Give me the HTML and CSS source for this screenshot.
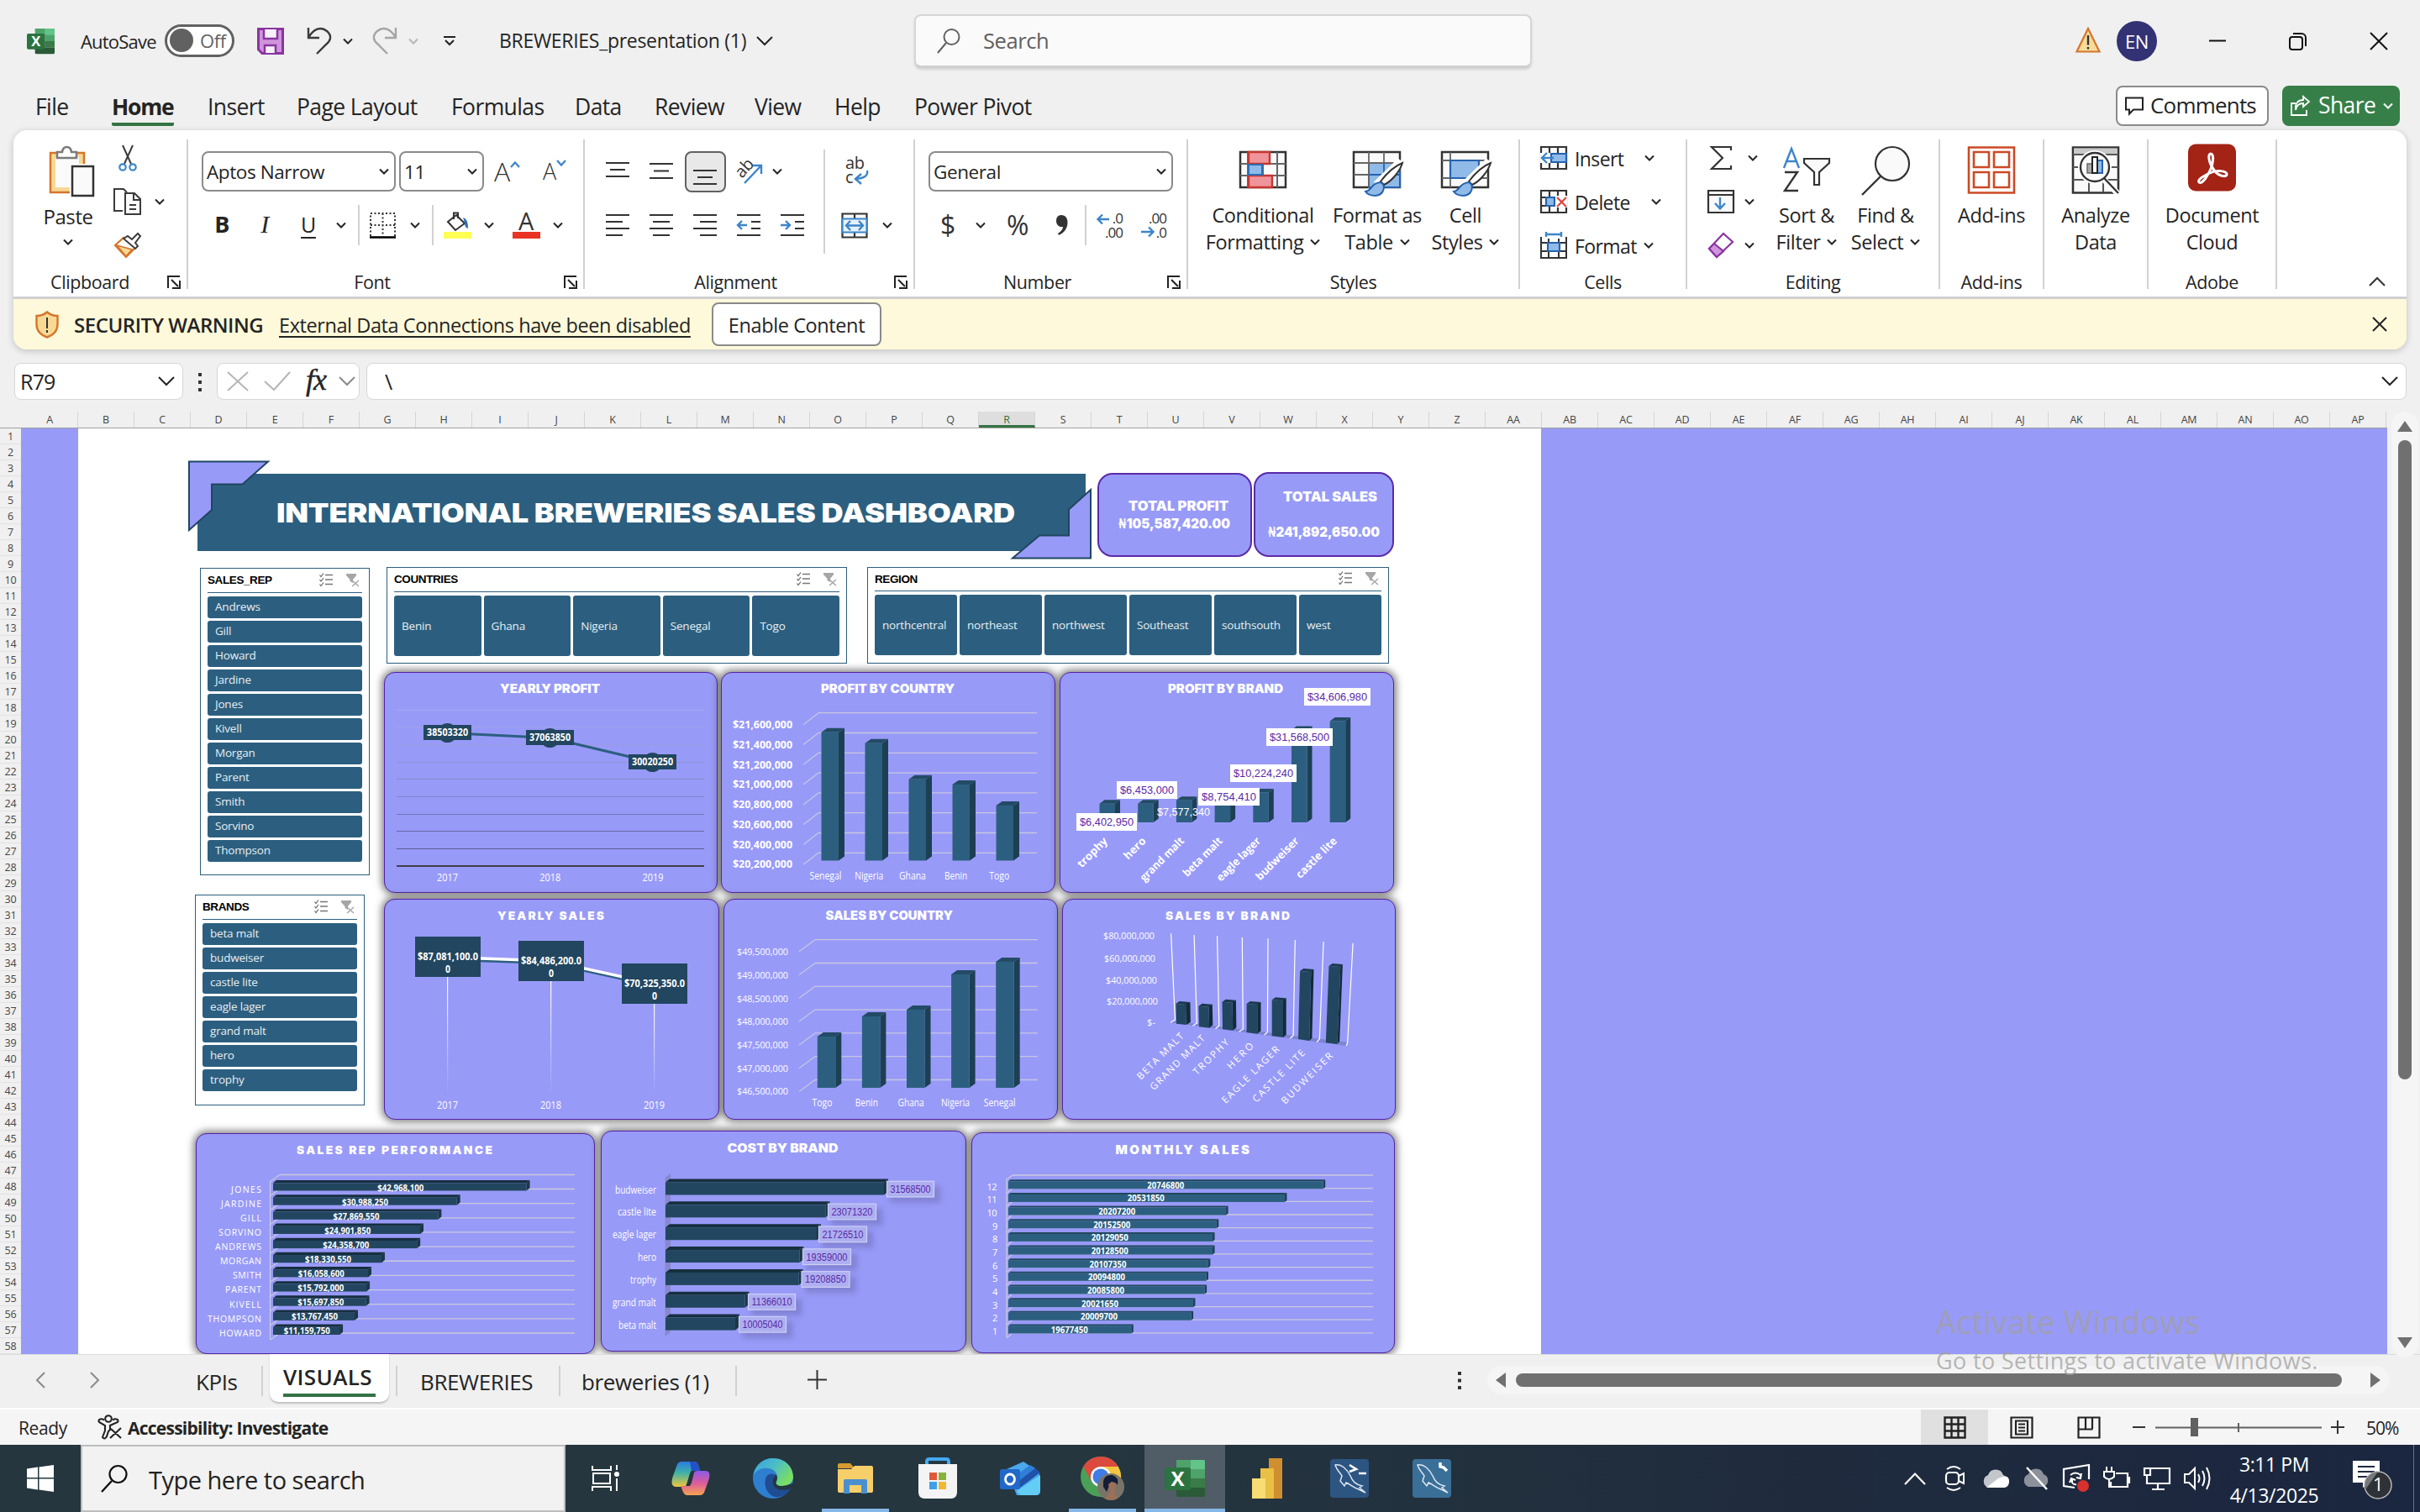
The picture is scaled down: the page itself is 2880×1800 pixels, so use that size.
FILE: index.html
```html
<!DOCTYPE html>
<html lang="en">
<head>
<meta charset="utf-8">
<title>BREWERIES_presentation (1) - Excel</title>
<link rel="stylesheet" href="styles.css">
</head>
<body>
<svg class="sprite" aria-hidden="true">
  <symbol id="chev" viewBox="0 0 12 8"><path d="M1 1.500 6 6.500 11 1.500" fill="none" stroke="currentColor" stroke-width="2"/></symbol>
  <symbol id="chev-lg" viewBox="0 0 20 12"><path d="M1 1 10 10 19 1" fill="none" stroke="currentColor" stroke-width="2"/></symbol>
  <symbol id="launch" viewBox="0 0 16 16"><path d="M1 15V1H15M5 5 13 13M15 6V15H6" fill="none" stroke="#222" stroke-width="2"/></symbol>
  <symbol id="multi" viewBox="0 0 16 16"><path d="M7 2.500H16M7 8H16M7 13.500H16" stroke="#777" stroke-width="1.300"/><path d="M.5 2.500 2 4.500 5 .5M.5 8 2 10 5 6M.5 13.500 2 15.500 5 11.500" fill="none" stroke="#666" stroke-width="1.200"/></symbol>
  <symbol id="unfilter" viewBox="0 0 16 16"><path d="M0 0H12V2L8 7V11L4.500 9V7L0 2Z" fill="#a6a6a6"/><path d="M7 8 15 15M15 8 7 15" stroke="#a6a6a6" stroke-width="1.500"/></symbol>
  <symbol id="xl" viewBox="0 0 48 46">
    <path d="M14 1H46a2 2 0 0 1 2 2V12H14Z" fill="#4ea36b"/><path d="M31 1H46a2 2 0 0 1 2 2V12H31Z" fill="#62c488"/>
    <path d="M14 12H31V23H14Z" fill="#3b9159"/><path d="M31 12H48V23H31Z" fill="#4ea36b"/><path d="M14 23H31V34H14Z" fill="#2c5a37"/><path d="M31 23H48V34H31Z" fill="#3a7b48"/><path d="M14 34H48V43a2 2 0 0 1-2 2H16a2 2 0 0 1-2-2Z" fill="#2a5a38"/>
    <rect x="0" y="10" width="31" height="27" rx="2.500" fill="#2b7340"/><text x="15.500" y="31.500" text-anchor="middle" class="xl-letter">X</text>
  </symbol>
</svg>

<header class="titlebar">
  <svg class="tb-logo" width="33" height="32"><use href="#xl"/></svg>
  <span class="tb-auto">AutoSave</span>
  <span class="toggle"><i></i>Off</span>
  <svg class="tb-save" width="32" height="32" viewBox="0 0 32 32"><path d="M1.500 1.500H30.500V30.500H6L1.500 26Z" fill="#cf94dc" stroke="#8a35a0" stroke-width="3"/><path d="M8 2V13H24V2" fill="#f7f0f8" stroke="#8a35a0" stroke-width="2.500"/><path d="M9 30V21H22V30" fill="#f7f0f8" stroke="#8a35a0" stroke-width="2.500"/></svg>
  <svg class="tb-undo" width="30" height="34" viewBox="0 0 30 34"><path d="M2 1V13H15M2 13C8 2 17-1 24 5s4 12-1 16L12 32" fill="none" stroke="#3b3b3b" stroke-width="2.400"/></svg>
  <svg class="chev tb-c1"><use href="#chev"/></svg>
  <svg class="tb-redo" width="30" height="34" viewBox="0 0 30 34"><path d="M28 1V13H15M28 13C22 2 13-1 6 5s-4 12 1 16L18 32" fill="none" stroke="#a5a5a5" stroke-width="2.400"/></svg>
  <svg class="chev tb-c2"><use href="#chev"/></svg>
  <svg class="tb-cust" width="14" height="12" viewBox="0 0 14 12"><path d="M0 1H14M2 5 7 10 12 5" fill="none" stroke="#222" stroke-width="2"/></svg>
  <span class="tb-name">BREWERIES_presentation (1)</span>
  <svg class="chev-lg tb-c3"><use href="#chev-lg"/></svg>
  <div class="tb-search">
    <svg width="28" height="30" viewBox="0 0 28 30"><circle cx="17.500" cy="10" r="9" fill="none" stroke="#616161" stroke-width="2"/><path d="M11 17 1 29" stroke="#616161" stroke-width="2"/></svg>
    <span>Search</span>
  </div>
  <svg class="tb-warn" width="30" height="31" viewBox="0 0 30 31"><path d="M15 2 28.500 29.500H1.500Z" fill="#f6dc9a" stroke="#d5752d" stroke-width="2.200"/><path d="M15 10V21.500M15 24V26.500" stroke="#333" stroke-width="2.400"/></svg>
  <span class="avatar">EN</span>
  <svg class="tb-min" width="20" height="20" viewBox="0 0 20 20"><path d="M0 9.500H20" stroke="#111" stroke-width="2"/></svg>
  <svg class="tb-max" width="21" height="21" viewBox="0 0 21 21"><rect x="1" y="5" width="15" height="15" rx="3" fill="none" stroke="#111" stroke-width="2"/><path d="M5 1H15a5 5 0 0 1 5 5V16" fill="none" stroke="#111" stroke-width="2"/></svg>
  <svg class="tb-close" width="20" height="20" viewBox="0 0 20 20"><path d="M0 0 20 20M20 0 0 20" stroke="#111" stroke-width="2"/></svg>
</header>

<nav class="menu">
  <span>File</span><span class="on">Home</span><span>Insert</span><span>Page Layout</span><span>Formulas</span><span>Data</span><span>Review</span><span>View</span><span>Help</span><span>Power Pivot</span>
  <div class="menu-btns">
    <span class="btn-comments"><svg width="22" height="22" viewBox="0 0 22 22"><path d="M1 1.500H21V15.500H10L5 20.500V15.500H1Z" fill="none" stroke="#222" stroke-width="2"/></svg>Comments</span>
    <span class="btn-share"><svg width="24" height="24" viewBox="0 0 24 24"><path d="M6 9H1V23H19V17" fill="none" stroke="#fff" stroke-width="1.800"/><path d="M6 17C7 11 10 9 15 9V13L22 7 15 1V5C9 5 5 9 6 17Z" fill="none" stroke="#fff" stroke-width="1.800"/></svg>Share<svg class="chev"><use href="#chev"/></svg></span>
  </div>
</nav>

<section class="ribbon-card">
<div class="ribbon">
  <div class="grp g-clip">
    <div class="cmds">
      <div class="paste">
        <svg width="56" height="62" viewBox="0 0 56 62"><path d="M2 9H42V56H2Z" fill="#f8d994" stroke="#d5752d" stroke-width="2.500"/><path d="M8 14H36V50H8Z" fill="#fafafa"/><path d="M10 15V8H16C17 0 26 0 27 8H33V15Z" fill="#fff" stroke="#7a7a7a" stroke-width="2.500"/><path d="M28 25H54V60H28Z" fill="#fafafa" stroke="#fff" stroke-width="6"/><path d="M28 25H53V60H28Z" fill="#fafafa" stroke="#333" stroke-width="2.500"/></svg>
        <span>Paste</span><svg class="chev"><use href="#chev"/></svg>
      </div>
      <div class="clip-tools">
        <div><svg width="22" height="32" viewBox="0 0 22 32"><path d="M5 1 15 23M17 1 7 23" stroke="#3b3b3b" stroke-width="2"/><circle cx="5" cy="27" r="3.700" fill="none" stroke="#3c85c9" stroke-width="2.200"/><circle cx="17" cy="27" r="3.700" fill="none" stroke="#3c85c9" stroke-width="2.200"/></svg></div>
        <div><svg width="34" height="32" viewBox="0 0 34 32"><path d="M11 27H1V1H12L16 5" fill="none" stroke="#3b3b3b" stroke-width="2"/><path d="M14 6H25L32 13V31H14Z" fill="#fafafa" stroke="#3b3b3b" stroke-width="2"/><path d="M24 7V14H31M19 20H27M19 25H27" fill="none" stroke="#3b3b3b" stroke-width="2"/></svg><svg class="chev"><use href="#chev"/></svg></div>
        <div><svg width="34" height="30" viewBox="0 0 34 30"><path d="M12 6 26 18 15 29 2 15Z" fill="#fff" stroke="#d5752d" stroke-width="2.200"/><path d="M4 15 22 20 15 28Z" fill="#f8d994" stroke="#d5752d" stroke-width="1.600"/><path d="M12 7 17 4 22 8 29 1 32 4 26 12 29 16 26 19Z" fill="#fff" stroke="#3b3b3b" stroke-width="2"/></svg></div>
      </div>
    </div>
    <div class="lab">Clipboard<svg class="launch"><use href="#launch"/></svg></div>
  </div>

  <div class="grp g-font">
    <div class="cmds rows">
      <div class="font-r1">
        <span class="combo">Aptos Narrow<svg class="chev"><use href="#chev"/></svg></span>
        <span class="combo">11<svg class="chev"><use href="#chev"/></svg></span>
        <span class="growA">A<svg width="12" height="8" viewBox="0 0 12 8"><path d="M1 7 6 1.500 11 7" fill="none" stroke="#3c85c9" stroke-width="2.200"/></svg></span>
        <span class="growA small">A<svg width="12" height="8" viewBox="0 0 12 8"><path d="M1 1 6 6.500 11 1" fill="none" stroke="#3c85c9" stroke-width="2.200"/></svg></span>
      </div>
      <div class="font-r2">
        <b class="fmt">B</b><i class="fmt it">I</i><u class="fmt un">U</u><svg class="chev"><use href="#chev"/></svg><hr>
        <svg width="31" height="31" viewBox="0 0 31 31"><path d="M1 28V1H30V28M15.500 1V28M1 15H30" fill="none" stroke="#333" stroke-width="2" stroke-dasharray="2 2.500"/><path d="M0 29.500H31" stroke="#000" stroke-width="2.600"/></svg><svg class="chev"><use href="#chev"/></svg><hr>
        <svg width="33" height="32" viewBox="0 0 33 32"><path d="M5 12 15 4 25 14 14 22Z" fill="#fafafa" stroke="#333" stroke-width="2"/><path d="M12 9V1.500H17V8" fill="none" stroke="#333" stroke-width="2"/><path d="M23 7Q29 8 29 20 25 19 25 13Z" fill="#2a6fb8"/><rect y="24" width="33" height="8" fill="#ffff54"/></svg><svg class="chev"><use href="#chev"/></svg>
        <span class="colorA">A</span><svg class="chev"><use href="#chev"/></svg>
      </div>
    </div>
    <div class="lab">Font<svg class="launch"><use href="#launch"/></svg></div>
  </div>

  <div class="grp g-align">
    <div class="cmds">
      <div class="align-l">
        <svg width="28" height="26" viewBox="0 0 28 26"><path d="M0 3H28M5 11H23M0 19H28" class="ln"/></svg>
        <svg width="28" height="26" viewBox="0 0 28 26"><path d="M0 4H28M5 12.500H23M0 21H28" class="ln"/></svg>
        <span class="pressed"><svg width="28" height="20" viewBox="0 0 28 20"><path d="M0 2H28M5 10H23M0 18H28" class="ln"/></svg></span>
        <svg width="34" height="34" viewBox="0 0 34 34"><text x="2" y="22" class="ab" transform="rotate(-48 10 16)">ab</text><path d="M12 31 32 10M22 10H32V20" class="bl"/></svg>
        <svg class="chev"><use href="#chev"/></svg>
        <svg width="28" height="28" viewBox="0 0 28 28"><path d="M0 2H28M0 10H20M0 18H28M0 26H20" class="ln"/></svg>
        <svg width="28" height="28" viewBox="0 0 28 28"><path d="M0 2H28M4 10H24M0 18H28M4 26H24" class="ln"/></svg>
        <svg width="28" height="28" viewBox="0 0 28 28"><path d="M0 2H28M8 10H28M0 18H28M8 26H28" class="ln"/></svg>
        <svg width="30" height="28" viewBox="0 0 30 28"><path d="M1 2H29M18 10H29M18 18H29M1 26H29" class="ln"/><path d="M13 14H2M7 9 2 14 7 19" class="bl"/></svg>
        <svg width="30" height="28" viewBox="0 0 30 28"><path d="M1 2H29M18 10H29M18 18H29M1 26H29" class="ln"/><path d="M1 14H12M7 9 12 14 7 19" class="bl"/></svg>
      </div>
      <hr>
      <div class="align-r">
        <svg class="wrap" width="32" height="34" viewBox="0 0 32 34"><text x="2" y="14" class="ab">ab</text><text x="2" y="31" class="ab">c</text><path d="M28 16Q30 25 14 26M21 20 14 26 21 32" class="bl"/></svg>
        <svg width="32" height="31" viewBox="0 0 32 31"><path d="M1.500 1.500H30.500V29.500H1.500ZM16 1V7M16 24V30" fill="#fafafa" stroke="#333" stroke-width="2.200"/><path d="M1.500 7.500H30.500V23.500H1.500Z" fill="#e8f2fb" stroke="#3c85c9" stroke-width="2.200"/><path d="M6 15.500H26M11 10 6 15.500 11 21M21 10 26 15.500 21 21" class="bl"/></svg>
        <svg class="chev"><use href="#chev"/></svg>
      </div>
    </div>
    <div class="lab">Alignment<svg class="launch"><use href="#launch"/></svg></div>
  </div>

  <div class="grp g-num">
    <div class="cmds rows">
      <span class="combo">General<svg class="chev"><use href="#chev"/></svg></span>
      <div class="num-r2">
        <span class="sym">$</span><svg class="chev"><use href="#chev"/></svg><span class="sym">%</span>
        <svg width="16" height="26" viewBox="0 0 16 26"><path d="M7 1C12 1 15 5 14.500 11 14 18 9 23 4 25L3 23C7 20 9 18 9 15 4 16 1 12 1 8 1 4 3 1 7 1Z" fill="#333"/></svg><hr>
        <svg width="32" height="32" viewBox="0 0 32 32"><text x="31" y="13.500" class="dec">.0</text><text x="31" y="31" class="dec">.00</text><path d="M15 9H1.500M7 3.500 1.500 9 7 14.500" class="bl"/></svg>
        <svg width="32" height="32" viewBox="0 0 32 32"><text x="31" y="13.500" class="dec">.00</text><text x="31" y="31" class="dec">.0</text><path d="M1 24H15M10 18.500 15.500 24 10 29.500" class="bl"/></svg>
      </div>
    </div>
    <div class="lab">Number<svg class="launch"><use href="#launch"/></svg></div>
  </div>

  <div class="grp g-styles">
    <div class="cmds">
      <div class="big"><svg width="60" height="60" viewBox="0 0 60 60"><path d="M3 7H57V49H3Z" fill="#fafafa" stroke="#333" stroke-width="2.500"/><path d="M12 7V49M30 7V49M47 7V49M3 21H57M3 35H57" stroke="#666" stroke-width="2"/><path d="M13 7H38V21H13ZM13 35H41V49H13Z" fill="#f0949b" stroke="#c8362f" stroke-width="2.400"/><path d="M13 22H29V34H13Z" fill="#90bae8" stroke="#2a6fb8" stroke-width="2"/></svg>
        <span>Conditional</span><span>Formatting <svg class="chev"><use href="#chev"/></svg></span></div>
      <div class="big"><svg width="60" height="60" viewBox="0 0 60 60"><path d="M2 7H57V49H2Z" fill="#fafafa" stroke="#333" stroke-width="2.500"/><path d="M20 20H57V49H20Z" fill="#90bae8" stroke="#2563b0" stroke-width="2"/><path d="M20 7V49M38 7V20M2 20H57M2 34H20" stroke="#666" stroke-width="1.800"/><path d="M38 20V49M20 34H57" stroke="#2563b0" stroke-width="1.800"/><path d="M60 21 36 45 30 42 55 18Z" fill="#fff" stroke="#fff" stroke-width="5"/><path d="M60 20C57 30 47 42 38 46L34 42C40 34 50 24 60 20Z" fill="#fff" stroke="#333" stroke-width="2"/><path d="M34 43C41 47 38 58 28 59 22 59 18 57 16 54 24 53 22 44 34 43Z" fill="#90bae8" stroke="#2563b0" stroke-width="2"/></svg>
        <span>Format as</span><span>Table <svg class="chev"><use href="#chev"/></svg></span></div>
      <div class="big"><svg width="60" height="60" viewBox="0 0 60 60"><path d="M2 7H57V49H2Z" fill="#fafafa" stroke="#333" stroke-width="2.500"/><path d="M12 7V49M2 17H57M2 38H57" stroke="#666" stroke-width="1.800"/><path d="M12 17H46V38H12Z" fill="#90bae8" stroke="#2563b0" stroke-width="2.200"/><path d="M60 21 36 45 30 42 55 18Z" fill="#fff" stroke="#fff" stroke-width="5"/><path d="M60 20C57 30 47 42 38 46L34 42C40 34 50 24 60 20Z" fill="#fff" stroke="#333" stroke-width="2"/><path d="M34 43C41 47 38 58 28 59 22 59 18 57 16 54 24 53 22 44 34 43Z" fill="#90bae8" stroke="#2563b0" stroke-width="2"/></svg>
        <span>Cell</span><span>Styles <svg class="chev"><use href="#chev"/></svg></span></div>
    </div>
    <div class="lab">Styles</div>
  </div>

  <div class="grp g-cells">
    <div class="cmds">
      <div class="cell-row"><svg width="32" height="30" viewBox="0 0 32 30"><path d="M1 2H31V28H1ZM11 2V28M21 2V28" fill="#fafafa" stroke="#333" stroke-width="2.200"/><path d="M13 10H31V20H13Z" fill="#90bae8" stroke="#2563b0" stroke-width="2.200"/><path d="M0 9H12V21H0Z" fill="#fff"/><path d="M16 15H1M8 9 2 15 8 21" class="bl"/></svg><span>Insert</span><svg class="chev"><use href="#chev"/></svg></div>
      <div class="cell-row"><svg width="32" height="30" viewBox="0 0 32 30"><path d="M1 2H31V28H1ZM11 2V28M21 2V28M1 10H10M1 20H10" fill="#fafafa" stroke="#333" stroke-width="2.200"/><path d="M7 10H17V20H7Z" fill="#90bae8" stroke="#2563b0" stroke-width="2.200"/><path d="M18 8H32V22H18Z" fill="#fff"/><path d="M20 10 31 21M31 10 20 21" stroke="#e0443e" stroke-width="2.200"/></svg><span>Delete</span><svg class="chev"><use href="#chev"/></svg></div>
      <div class="cell-row near"><svg width="32" height="32" viewBox="0 0 32 32"><path d="M1 6V31H31V6M10 8V31M22 8V31M1 13H31M1 23H31" fill="none" stroke="#333" stroke-width="2"/><path d="M9 13H23V23H9Z" fill="#90bae8" stroke="#2563b0" stroke-width="2.200"/><path d="M7 3H25M7 0V6M25 0V6" class="bl"/></svg><span>Format</span><svg class="chev"><use href="#chev"/></svg></div>
    </div>
    <div class="lab">Cells</div>
  </div>

  <div class="grp g-edit">
    <div class="cmds">
      <div class="edit-tools">
        <div><svg width="32" height="30" viewBox="0 0 32 30"><path d="M28 6V2H5L18 15 5 28H28V24" fill="none" stroke="#333" stroke-width="2.200"/></svg><svg class="chev"><use href="#chev"/></svg></div>
        <div><svg width="32" height="30" viewBox="0 0 32 30"><path d="M1 2H31V28H1ZM1 7H31" fill="#fafafa" stroke="#333" stroke-width="2.200"/><path d="M15 10V23M9 17 15 23.500 21 17" class="bl"/></svg><svg class="chev"><use href="#chev"/></svg></div>
        <div><svg width="32" height="32" viewBox="0 0 32 32"><path d="M19 2 30 12 11 30 2 20Z" fill="#fff" stroke="#8a35a0" stroke-width="2.200"/><path d="M8 14 19 23 11 30 2 20Z" fill="#cf94dc" stroke="#8a35a0" stroke-width="2.200"/></svg><svg class="chev"><use href="#chev"/></svg></div>
      </div>
      <div class="big"><svg width="60" height="60" viewBox="0 0 60 60"><path d="M3 26 12 3 21 26M6 18H18" fill="none" stroke="#3c85c9" stroke-width="2.400"/><path d="M4 31H19L4 53H20" fill="none" stroke="#333" stroke-width="2.400"/><path d="M27 15H57V20L45 31V46H39V31L27 20Z" fill="#fafafa" stroke="#333" stroke-width="2.200"/></svg>
        <span>Sort &amp;</span><span>Filter <svg class="chev"><use href="#chev"/></svg></span></div>
      <div class="big"><svg width="60" height="60" viewBox="0 0 60 60"><circle cx="38" cy="21" r="20" fill="#fafafa" stroke="#333" stroke-width="2.200"/><path d="M24 36 2 58" stroke="#333" stroke-width="2.400"/></svg>
        <span>Find &amp;</span><span>Select <svg class="chev"><use href="#chev"/></svg></span></div>
    </div>
    <div class="lab">Editing</div>
  </div>

  <div class="grp g-add">
    <div class="cmds"><div class="big"><svg width="60" height="60" viewBox="0 0 60 60"><path d="M3 1.500H57V55.500H3ZM9 7H27V25H9ZM33 7H51V25H33ZM9 31H27V49H9ZM33 31H51V49H33Z" fill="#fff" stroke="#cb4a25" stroke-width="2.600"/></svg><span>Add-ins</span></div></div>
    <div class="lab">Add-ins</div>
  </div>
  <div class="grp g-add">
    <div class="cmds"><div class="big"><svg width="60" height="60" viewBox="0 0 60 60"><path d="M3 1.500H57V55.500H3Z" fill="#fafafa" stroke="#333" stroke-width="2.600"/><path d="M4 2.500H56V9H4Z" fill="#c8c8c8"/><path d="M3 10H57M3 25H14M48 25H57M3 40H18M44 40H57M22 43V55M39 43V55" stroke="#555" stroke-width="2"/><circle cx="29" cy="25" r="20" fill="#fff"/><path d="M38 38 58 58" stroke="#fff" stroke-width="7"/><circle cx="29" cy="25" r="17" fill="#fafafa" stroke="#333" stroke-width="2.400"/><path d="M40 38 57 56" stroke="#333" stroke-width="2.400"/><path d="M20 21H26V32H20Z" fill="#aaa" stroke="#666" stroke-width="1.500"/><path d="M32 17H38V32H32Z" fill="#90bae8" stroke="#2563b0" stroke-width="2"/><path d="M26 13H32V32H26Z" fill="#fff" stroke="#222" stroke-width="2"/></svg><span>Analyze</span><span>Data</span></div></div>
    <div class="lab"></div>
  </div>
  <div class="grp g-adobe">
    <div class="cmds"><div class="big"><svg width="60" height="60" viewBox="0 0 60 60"><rect x="1" y="-2.500" width="57" height="56" rx="9" fill="#a32315"/><path d="M28 9C23 10 27 23 33 30 38 36 46 37 47 34 48 29 34 28 27 32 18 36 12 40 14 43 18 46 25 34 28 27 31 20 32 9 28 9Z" fill="none" stroke="#fff" stroke-width="3"/></svg><span>Document</span><span>Cloud</span></div></div>
    <div class="lab">Adobe</div>
  </div>
  <svg class="collapse" width="20" height="12" viewBox="0 0 20 12"><path d="M1 11 10 2 19 11" fill="none" stroke="#333" stroke-width="2"/></svg>
</div>
<div class="warnbar">
  <svg width="28" height="33" viewBox="0 0 28 33"><path d="M14 1.500C18 5 22 6 26.500 6V16C26.500 24 21 29 14 31.500 7 29 1.500 24 1.500 16V6C6 6 10 5 14 1.500Z" fill="#f8d994" stroke="#d5752d" stroke-width="2.400"/><path d="M14 8V21M14 23V26" stroke="#333" stroke-width="2"/></svg>
  <b>SECURITY WARNING</b><u>External Data Connections have been disabled</u><span class="btn-enable">Enable Content</span>
  <svg class="warn-x" width="18" height="18" viewBox="0 0 18 18"><path d="M1 1 17 17M17 1 1 17" stroke="#222" stroke-width="2"/></svg>
</div>
</section>

<section class="fbar">
  <div class="namebox">R79<svg class="chev-lg"><use href="#chev-lg"/></svg></div>
  <svg class="dots" width="6" height="24" viewBox="0 0 6 24"><path d="M1 1H5V5H1ZM1 10H5V14H1ZM1 19H5V23H1Z" fill="#333"/></svg>
  <div class="fxbox">
    <svg width="26" height="24" viewBox="0 0 26 24"><path d="M1 1 25 23M25 1 1 23" stroke="#b5b5b5" stroke-width="2"/></svg>
    <svg width="32" height="24" viewBox="0 0 32 24"><path d="M1 12 12 22 31 1" fill="none" stroke="#b5b5b5" stroke-width="2"/></svg>
    <i>fx</i><svg class="chev-lg dim"><use href="#chev-lg"/></svg>
  </div>
  <div class="formula">\<svg class="chev-lg"><use href="#chev-lg"/></svg></div>
</section>

<main class="sheet">
  <div class="colhead" id="cols"></div>
  <div class="vscroll"><i class="up"></i><i class="thumb"></i><i class="down"></i></div>
  <div class="rowhead" id="rows"></div>
  <div class="cells">
    <div class="canvas">
      <svg class="banner" width="1080" height="115" viewBox="222 552 1080 115">
        <rect x="235" y="564" width="1057" height="92" fill="#2c5f7f"/>
        <text x="329" y="622" textLength="879" lengthAdjust="spacingAndGlyphs" class="banner-title">INTERNATIONAL BREWERIES SALES DASHBOARD</text>
        <path d="M225 549.500V631L252 607V576.500H288.500L319 549.500Z" fill="#989af8" stroke="#1f4661" stroke-width="2"/>
        <path d="M1298 583V664.500H1205L1237 637.500H1272V606.500Z" fill="#989af8" stroke="#1f4661" stroke-width="2"/>
      </svg>
      <div class="kpi kpi-profit"></div>
      <div class="kpi kpi-sales"></div>
      <svg class="kpi-text" width="360" height="110" viewBox="1304 558 360 110">
        <text x="1343" y="608" textLength="119" lengthAdjust="spacingAndGlyphs">TOTAL PROFIT</text>
        <text x="1331" y="629" textLength="133" lengthAdjust="spacingAndGlyphs"><tspan class="naira">₦</tspan>105,587,420.00</text>
        <text x="1527" y="597" textLength="112" lengthAdjust="spacingAndGlyphs">TOTAL SALES</text>
        <text x="1509" y="639" textLength="133" lengthAdjust="spacingAndGlyphs"><tspan class="naira">₦</tspan>241,892,650.00</text>
      </svg>
      <div class="slicer sl-rep"><h4>SALES_REP<svg><use href="#multi"/></svg><svg><use href="#unfilter"/></svg></h4><ul><li>Andrews</li><li>Gill</li><li>Howard</li><li>Jardine</li><li>Jones</li><li>Kivell</li><li>Morgan</li><li>Parent</li><li>Smith</li><li>Sorvino</li><li>Thompson</li></ul></div>
      <div class="slicer sl-brand"><h4>BRANDS<svg><use href="#multi"/></svg><svg><use href="#unfilter"/></svg></h4><ul><li>beta malt</li><li>budweiser</li><li>castle lite</li><li>eagle lager</li><li>grand malt</li><li>hero</li><li>trophy</li></ul></div>
      <div class="slicer wide sl-country"><h4>COUNTRIES<svg><use href="#multi"/></svg><svg><use href="#unfilter"/></svg></h4><ul><li>Benin</li><li>Ghana</li><li>Nigeria</li><li>Senegal</li><li>Togo</li></ul></div>
      <div class="slicer wide sl-region"><h4>REGION<svg><use href="#multi"/></svg><svg><use href="#unfilter"/></svg></h4><ul><li>northcentral</li><li>northeast</li><li>northwest</li><li>Southeast</li><li>southsouth</li><li>west</li></ul></div>
      <div class="panel p-yp"></div><div class="panel p-pc"></div><div class="panel p-pb"></div>
      <div class="panel p-ys"></div><div class="panel p-sc"></div><div class="panel p-sb"></div>
      <div class="panel p-rep"></div><div class="panel p-cost"></div><div class="panel p-mon"></div>
      <svg id="charts" class="charts" width="1440" height="820" viewBox="230 795 1440 820"></svg>
    </div>
  </div>
</main>

<footer class="tabs">
  <svg class="t-prev" width="12" height="20" viewBox="0 0 12 20"><path d="M11 1 2 10 11 19" fill="none" stroke="#8a8a8a" stroke-width="2"/></svg>
  <svg class="t-next" width="12" height="20" viewBox="0 0 12 20"><path d="M1 1 10 10 1 19" fill="none" stroke="#8a8a8a" stroke-width="2"/></svg>
  <span class="tab t1">KPIs</span><span class="tab active"><b>VISUALS</b></span><span class="tab t3">BREWERIES</span><span class="tab t4">breweries (1)</span>
  <svg class="t-add" width="23" height="23" viewBox="0 0 23 23"><path d="M0 11.500H23M11.500 0V23" stroke="#333" stroke-width="2"/></svg>
  <svg class="t-dots" width="4" height="22" viewBox="0 0 4 22"><path d="M0 0H4V4H0ZM0 8.500H4V12.500H0ZM0 17H4V21H0Z" fill="#333"/></svg>
  <div class="hscroll"><i class="left"></i><i class="thumb"></i><i class="right"></i></div>
</footer>
<section class="status">
  <span class="s-ready">Ready</span>
  <svg width="30" height="30" viewBox="0 0 30 30"><g fill="none" stroke="#222" stroke-width="2.100"><circle cx="13" cy="5" r="3.800"/><path d="M8 6.500C4 4 0 6 2 9L9 13V19L6 27C8 30 10 28 11 26L13 20 15 18V13L24 9C26 6 22 4 18 6.500M16 17 28 28M28 16 15 28"/></g></svg>
  <b>Accessibility: Investigate</b>
  <div class="views">
    <span class="sel"><svg width="27" height="27" viewBox="0 0 27 27"><path d="M1.500 1.500H25.500V25.500H1.500ZM9.500 1V26M17.500 1V26M1 9.500H26M1 17.500H26" fill="none" stroke="#222" stroke-width="2.400"/></svg></span>
    <span><svg width="28" height="27" viewBox="0 0 28 27"><path d="M1.500 1.500H26.500V25.500H1.500ZM7 5.500H21V21.500H7ZM10 9.500H18M10 13.500H18M10 17.500H18" fill="none" stroke="#222" stroke-width="2.200"/></svg></span>
    <span><svg width="28" height="27" viewBox="0 0 28 27"><path d="M1.500 1.500H26.500V25.500H1.500ZM10 1V15M18 1V15M1 15.500H18.500" fill="none" stroke="#222" stroke-width="2.200"/></svg></span>
  </div>
  <svg class="zoombar" width="252" height="30" viewBox="0 0 252 30"><path d="M0 15H15M236 15H252M244 7V23" stroke="#333" stroke-width="2"/><path d="M27 15.500H225" stroke="#616161" stroke-width="2"/><path d="M126 10V21" stroke="#616161" stroke-width="2"/><rect x="69" y="4" width="9" height="22" fill="#616161"/></svg>
  <span class="pct">50%</span>
</section>

<section class="taskbar">
  <svg class="k-win" width="32" height="32" viewBox="0 0 32 32"><path d="M0 4.500 13 2.600V15H0ZM14.500 2.400 32 0V15H14.500ZM0 16.500H13V29.400L0 27.500ZM14.500 16.500H32V32L14.500 29.600Z" fill="#fff"/></svg>
  <div class="k-search"><svg width="32" height="33" viewBox="0 0 32 33"><circle cx="20.500" cy="11" r="10" fill="none" stroke="#111" stroke-width="2.200"/><path d="M13 19 1 32" stroke="#111" stroke-width="2.400"/></svg><span>Type here to search</span></div>
  <div class="apps">
    <span><svg width="34" height="32" viewBox="0 0 34 32"><g fill="none" stroke="#fff" stroke-width="2"><path d="M2 1V6H24V1M2 31V26H24V31M3 10H23V22H3ZM31 0V6M31 16V31"/></g><circle cx="31" cy="11" r="3" fill="#fff"/></svg></span>
    <span><svg width="46" height="42" viewBox="0 0 46 42"><defs><linearGradient id="cp1" x1="0" y1="0" x2="0" y2="1"><stop offset="0" stop-color="#2a7be4"/><stop offset=".45" stop-color="#3fb3a5"/><stop offset="1" stop-color="#f0c63c"/></linearGradient><linearGradient id="cp2" x1="0" y1="0" x2="0" y2="1"><stop offset="0" stop-color="#8a5be8"/><stop offset=".5" stop-color="#dd5c9a"/><stop offset="1" stop-color="#f4a352"/></linearGradient></defs><path d="M12 1H28C32 2 33 8 34 12H24C22 12 21 20 18 28 17 31 15 31 10 31H6C-1 31 0 24 2 18L6 7C7 3 9 1 12 1Z" fill="url(#cp1)"/><path d="M22 1H28C32 2 33 8 34 12H24Z" fill="#2450c8"/><path d="M34 41H18C14 40 13 34 11 30H21C24 30 25 22 27 14 28 12 30 12 34 12H40C47 12 46 18 44 24L40 35C39 39 37 41 34 41Z" fill="url(#cp2)"/></svg></span>
    <span><svg width="50" height="48" viewBox="0 0 50 48"><defs><linearGradient id="ed" x1="0" y1="0" x2="1" y2=".6"><stop offset="0" stop-color="#3aa0de"/><stop offset=".5" stop-color="#4bbcc9"/><stop offset="1" stop-color="#7be05e"/></linearGradient></defs><circle cx="25" cy="24" r="24" fill="#2f7fd0"/><path d="M1 22C3 8 13 0 25 0 40 0 49 11 49 22 49 29 43 33 36 33 30 33 28 31 29 28 32 24 30 13 19 12 10 11 3 16 1 22Z" fill="url(#ed)"/><path d="M17 22C12 33 20 48 32 46 38 45 43 41 46 36 40 38 28 39 25 31 23 26 26 24 28 21 25 17 19 18 17 22Z" fill="#1f4d93"/><path d="M29 20C32 25 27 28 29 31 31 34 40 34 50 29L47 36C38 39 28 39 25 31 23 26 26 24 28 19Z" fill="#243740"/></svg></span>
    <span class="run"><svg width="44" height="38" viewBox="0 0 44 38"><path d="M1 3Q1 1 3 1H16L21 7H1Z" fill="#d69a2e"/><path d="M1 8H17L21 4H41Q43 4 43 6V34Q43 36 41 36H3Q1 36 1 34Z" fill="#f6cf6b"/><path d="M8 37V22Q8 20 10 20H34Q36 20 36 22V37H29V27H15V37Z" fill="#4a90d0"/></svg></span>
    <span><svg width="48" height="48" viewBox="0 0 48 48"><path d="M11 11V4Q11 1 14 1H34Q37 1 37 4V11" fill="none" stroke="#43aaf0" stroke-width="4"/><path d="M1 7H47V40Q47 48 39 48H9Q1 48 1 40Z" fill="#f4f4f4"/><path d="M14 17H23V26H14Z" fill="#e0583a"/><path d="M25 17H34V26H25Z" fill="#86b43a"/><path d="M14 28H23V37H14Z" fill="#3ea0ea"/><path d="M25 28H34V37H25Z" fill="#f2b735"/></svg></span>
    <span><svg width="48" height="42" viewBox="0 0 48 42"><path d="M8 10 28 1 47 14V36Q47 41 42 41H20Z" fill="#4aa8ec"/><path d="M24 17 40 7 48 14 24 32Z" fill="#1f52a8"/><path d="M24 14 36 5 42 9 24 23Z" fill="#2f7fd8"/><path d="M20 36 48 17V36Q48 41 43 41H24Z" fill="#64cdf5"/><rect x="0" y="10" width="24" height="24" rx="2.500" fill="#2268c8"/><ellipse cx="12" cy="22" rx="5.500" ry="6" fill="none" stroke="#fff" stroke-width="2.800"/></svg></span>
    <span class="run"><svg width="52" height="52" viewBox="0 0 52 52"><circle cx="24" cy="24" r="24" fill="#4aa057"/><path d="M3.200 12A24 24 0 0 1 44.800 12H24L13.600 30Z" fill="#dc4a3d"/><path d="M44.800 12A24 24 0 0 1 24 48L34.400 30 24 12Z" fill="#f3c540"/><circle cx="24" cy="24" r="12" fill="#fff"/><circle cx="24" cy="24" r="9.500" fill="#3f7de6"/><circle cx="36" cy="36" r="16" fill="#7a7468"/><path d="M27 30Q28 21 38 22 46 25 44 34 42 30 36 30L31 42 27 36Z" fill="#141d38"/><path d="M33 33Q38 28 42 33L40 42 44 50Q36 54 29 50L35 42Z" fill="#9b6f58"/></svg></span>
    <span class="cur"><svg width="48" height="46" viewBox="0 0 48 46"><use href="#xl"/></svg></span>
    <span><svg width="37" height="48" viewBox="0 0 37 48"><path d="M20 0H36V48H20Z" fill="#d08f2e"/><path d="M10 12H26V48H10Z" fill="#eabf45"/><path d="M0 24H16V48H0Z" fill="#f6de72"/></svg></span>
    <span><svg width="46" height="46" viewBox="0 0 46 46"><rect width="46" height="46" rx="4" fill="#2d5582"/><path d="M6 7C13 5 20 12 24 20 27 27 30 30 38 32L35 34 42 40 34 36C28 34 24 30 19 28L17 32 12 26 14 20C12 16 8 14 6 7Z" fill="none" stroke="#dce6f0" stroke-width="1.500"/><path d="M23 7 31 12 23 15M34 17H43" fill="none" stroke="#fff" stroke-width="2.600"/></svg></span>
    <span><svg width="46" height="46" viewBox="0 0 46 46"><rect width="46" height="46" rx="4" fill="#3a6f98"/><path d="M6 7C13 5 20 12 24 20 27 27 30 30 38 32L35 34 42 40 34 36C28 34 24 30 19 28L17 32 12 26 14 20C12 16 8 14 6 7Z" fill="none" stroke="#dce6f0" stroke-width="1.500"/><path d="M33 4V9L37 10 41 14" fill="none" stroke="#fff" stroke-width="3.500"/></svg></span>
  </div>
  <div class="tray">
    <svg width="26" height="15" viewBox="0 0 26 15"><path d="M1 14 13 1.500 25 14" fill="none" stroke="#fff" stroke-width="2.200"/></svg>
    <svg width="26" height="30" viewBox="0 0 26 30"><path d="M3 4Q11-2 19 4M3 26Q11 32 19 26M17 12 23 9V21L17 18" fill="none" stroke="#fff" stroke-width="2"/><rect x="2" y="8" width="15" height="14" rx="4" fill="none" stroke="#fff" stroke-width="2.200"/></svg>
    <svg width="34" height="24" viewBox="0 0 34 24"><path d="M8 23A8 8 0 0 1 8 8 9.500 9.500 0 0 1 26 8 8 8 0 0 1 26 23Z" fill="#c3c6cc"/><path d="M6 23 20 12Q34 5 33 17 32 23 26 23Z" fill="#fff"/></svg>
    <svg width="34" height="28" viewBox="0 0 34 28"><path d="M8 24A8 8 0 0 1 8 9 9.500 9.500 0 0 1 26 9 8 8 0 0 1 26 24Z" fill="#8c919b"/><path d="M6 1 30 27" stroke="#fff" stroke-width="2.500"/></svg>
    <svg width="34" height="34" viewBox="0 0 34 34"><path d="M15 28 2 26V6L32 1V18" fill="none" stroke="#fff" stroke-width="2.200"/><path d="M10 13Q16 8 22 13V17M23 11 22 17 17 16M12 22V17M9 22 11 17 16 19M11 20Q13 25 17 24" fill="none" stroke="#fff" stroke-width="2"/><circle cx="25" cy="26" r="7" fill="#d93030"/></svg>
    <svg width="34" height="28" viewBox="0 0 34 28"><path d="M5 0V6M11 0V6M2 6H14V12Q8 18 2 12ZM8 16V24H12" fill="none" stroke="#fff" stroke-width="2"/><path d="M16 8H30V24H10V18M32 12V20" fill="none" stroke="#fff" stroke-width="2.200"/></svg>
    <svg width="34" height="30" viewBox="0 0 34 30"><path d="M9 3H32V21H5V13M18 21V28M11 28H26M2 3H9V11H2ZM5 11V15" fill="none" stroke="#fff" stroke-width="2.200"/></svg>
    <svg width="34" height="30" viewBox="0 0 34 30"><path d="M2 10H7L14 3V27L7 20H2ZM18 10Q21 15 18 20M23 6Q28 15 23 24M28 2Q35 15 28 28" fill="none" stroke="#fff" stroke-width="2"/></svg>
  </div>
  <div class="clock"><span>3:11 PM</span><span>4/13/2025</span></div>
  <svg class="k-note" width="50" height="50" viewBox="0 0 50 50"><path d="M1 1H33V27H20L13 33V27H1Z" fill="#fff"/><path d="M7 8H27M7 14H27M7 20H20" stroke="#1f2b3d" stroke-width="2.200"/><circle cx="31" cy="30" r="16" fill="#2e3236" stroke="#b8b8b8" stroke-width="1.500"/><path d="M16 30A16 16 0 0 1 31 14V14L17 34Z" fill="#77787a"/><text x="31" y="37" text-anchor="middle" class="note-n">1</text></svg>
  <hr class="k-peek">
</section>
<div class="watermark"><span>Activate Windows</span><span>Go to Settings to activate Windows.</span></div>
<script src="charts.js"></script>
</body>
</html>
```
FILE: styles.css
```css
*{box-sizing:border-box}
body{margin:0;width:2880px;height:1800px;overflow:hidden;background:#f0f0f0;color:#242424;font:24px/1.2 "Open Sans","Noto Sans",sans-serif;font-stretch:95%;letter-spacing:-.4px;position:relative}
svg{display:block;flex:none;overflow:visible}
hr{border:0;margin:0;width:2px;background:#d1d1d1;align-self:stretch}
.sprite{display:none}
.xl-letter{font:700 24px "Open Sans",sans-serif;fill:#fff;letter-spacing:0}
.chev{width:12px;height:8px}
.chev-lg{width:20px;height:12px}

.titlebar{height:98px;display:flex;align-items:center;padding-left:32px;white-space:nowrap}
.tb-auto{margin-left:31px;width:88px;font-size:22px;letter-spacing:-.8px}
.toggle{margin-left:12px;width:83px;height:39px;border:3px solid #616161;border-radius:20px;display:flex;align-items:center;background:#fff;color:#616161;font-size:22px;padding-left:3px;gap:8px;margin-top:-2px}
.toggle i{width:28px;height:28px;border-radius:50%;background:#616161}
.tb-save{margin-left:27px}
.tb-undo{margin-left:27px}
.tb-c1{margin-left:13px}
.tb-redo{margin-left:23px}
.tb-c2{margin-left:13px;color:#b5b5b5}
.tb-cust{margin-left:30px}
.tb-name{margin-left:52px;width:306px;font-size:23px;letter-spacing:-.3px}
.tb-search{margin-left:168px;width:735px;height:64px;border:2px solid #d6d6d6;border-bottom:3px solid #cfcfcf;border-radius:8px;background:#fafafa;box-shadow:0 2px 3px rgba(0,0,0,.12);display:flex;align-items:center;gap:27px;padding-left:25px;color:#616161;font-size:25.500px}
.tb-warn{margin-left:647px;margin-top:-4px}
.avatar{margin-left:19px;width:48px;height:48px;border-radius:50%;background:#333274;color:#fff;font-size:22px;display:flex;align-items:center;justify-content:center}
.tb-min{margin-left:62px}
.tb-max{margin-left:75px}
.tb-close{margin-left:76px}

.menu{height:57px;display:grid;grid-template-columns:91px 114px 106px 184px 147px 95px 119px 95px 95px 1fr auto;padding:4px 24px 5px 42px;align-items:center;font-size:26.500px;letter-spacing:-.6px;white-space:nowrap}
.menu>span{height:48px;line-height:51px}
.menu .on{font-weight:700;justify-self:start;border-bottom:4px solid #337344;letter-spacing:-1.200px;border-radius:0 0 2px 2px}
.menu-btns{display:flex;gap:16px}
.btn-comments,.btn-share{height:48px;border-radius:8px;display:flex;align-items:center}
.btn-comments{width:182px;border:2px solid #8a8a8a;background:#fff;padding-left:14px;gap:8px;padding-left:9px;font-size:26px;letter-spacing:-.8px}
.btn-share{width:140px;background:#377f48;color:#fff;padding-left:10px;gap:9px}

.ribbon-card{margin:0 16px;width:2848px;height:261px;border-radius:16px;background:#fff;overflow:hidden;box-shadow:0 2px 8px rgba(0,0,0,.2)}
.ribbon{height:201px;padding:11px 0 10px;display:flex;border-bottom:3px solid #d0d0d0;white-space:nowrap}
.grp{height:178px;border-right:2px solid #d1d1d1;display:flex;flex-direction:column;position:relative}
.cmds{flex:1;display:flex}
.rows{flex-direction:column;gap:16px;padding:14px 0 0 16px}
.lab{height:16px;line-height:16px;font-size:21.500px;text-align:center;position:relative}
.launch{position:absolute;right:7px;top:0;width:16px;height:16px}
.g-clip{width:208px}.g-clip .lab{padding-right:24px}
.g-font .lab,.g-align .lab,.g-num .lab{padding-right:32px}
.paste{width:78px;margin-left:26px;padding-top:7px;display:flex;flex-direction:column;align-items:center}
.paste svg:first-child{margin-left:10px}
.paste span{margin:9px 0 11px}
.clip-tools{margin:-4px 0 0 15px}
.clip-tools div{height:52px;display:flex;align-items:center;gap:15px}
.clip-tools div:first-child svg{margin-left:6px}
.g-font{width:472px}
.combo{height:48px;border:2px solid #8a8a8a;border-radius:8px;display:flex;align-items:center;justify-content:space-between;padding:0 6px 0 4px;font-size:22.500px}
.font-r1{display:grid;grid-template-columns:231px 101px 51px 40px;column-gap:4px;align-items:center}
.growA{display:flex;font-size:32px;color:#333;margin-left:8px;line-height:40px;font-weight:300}
.growA svg{margin-top:8px}
.growA.small{font-size:27px;line-height:44px;margin-left:11px}
.font-r2{display:grid;grid-template-columns:48px 54px 50px 27px 16px 40px 37px 6px 52px 24px 64px 11px;height:48px;align-items:center;justify-items:center}
.fmt{font-size:27px;line-height:34px;margin-top:-2px}
.it{font-family:"Liberation Serif",serif;font-size:30px}
.un{text-underline-offset:5px;text-decoration-thickness:2px;font-size:25px}
.colorA{width:33px;height:32px;border-bottom:8px solid #e93323;text-align:center;font-size:29px;line-height:22px;color:#333}
.g-align{width:393px}
.align-l{display:grid;grid-template-columns:repeat(5,52px);grid-template-rows:48px 48px;row-gap:16px;margin:14px 11px 0 13px;align-items:center;justify-items:center}
.align-l .chev{justify-self:start;margin-left:2px}
.pressed{width:49px;height:49px;border:2px solid #616161;border-radius:8px;background:#e8e8e8;display:flex;align-items:center;justify-content:center;padding-top:14px}
.g-align hr{height:124px;margin-top:12px;align-self:start}
.align-r{display:grid;grid-template-columns:36px 42px;grid-template-rows:48px 48px;row-gap:16px;margin:14px 0 0 17px;align-items:center;justify-items:center}
.wrap{grid-column:1/3;justify-self:start;margin-left:5px}
.ln{stroke:#333;stroke-width:2.200;fill:none}
.bl{stroke:#3c85c9;stroke-width:2.400;fill:none}
.ab{font:20px "Open Sans",sans-serif;fill:#333}
.dec{font:17px "Open Sans",sans-serif;fill:#333;text-anchor:end;letter-spacing:-1px}
.g-num{width:325px}.g-num .combo{width:291px}
.num-r2{display:grid;grid-template-columns:46px 32px 56px 50px 6px 52px 52px;height:48px;align-items:center;justify-items:center}
.sym{font-size:32px;line-height:40px;font-weight:400;color:#333}
.g-styles{width:395px}
.big{display:flex;flex-direction:column;align-items:center;padding-top:8px}
.big>svg{margin-bottom:6px}
.big span{line-height:32px;height:32px;display:flex;align-items:center;gap:8px;font-size:23.500px}
.g-styles .cmds{padding-left:14px}
.g-styles .big:nth-child(1){width:150px}.g-styles .big:nth-child(2){width:122px}.g-styles .big:nth-child(3){width:88px}
.g-cells{width:199px}
.g-cells .cmds{flex-direction:column;margin-top:-4px}
.cell-row{height:52px;display:flex;align-items:center;padding-left:24px;font-size:23px;letter-spacing:-.6px}
.cell-row span{margin:3px 25px 0 9px}
.cell-row.near span{margin-right:8px}
.g-edit{width:301px}
.edit-tools{margin:-4px 0 0 24px;width:75px}
.edit-tools div{height:52px;display:flex;align-items:center;gap:12px}
.edit-tools div:first-child{gap:16px}
.g-edit .big:nth-child(2){width:86px}.g-edit .big:nth-child(3){width:102px}
.g-add{width:124px}.g-add .cmds,.g-adobe .cmds{justify-content:center}
.g-adobe{width:153px}
.collapse{margin:163px 0 0 109px}
.warnbar{height:60px;background:#fef9da;display:flex;align-items:center;padding-left:26px;white-space:nowrap}
.warnbar b{margin:2px 0 0 18px;width:226px;font-weight:600;font-size:24px;letter-spacing:-.45px}
.warnbar u{margin:2px 0 0 18px;width:496px;font-size:23.500px;letter-spacing:-.42px;text-underline-offset:4px;text-decoration-thickness:1.500px}
.btn-enable{margin-left:19px;width:202px;height:52px;border:2px solid #8a8a8a;border-radius:8px;background:#fff;display:flex;align-items:center;justify-content:center;font-size:23.500px;padding-top:2px}
.warn-x{margin-left:1774px}

.fbar{display:flex;padding:16px 16px 0 17px;height:74px;font-size:25px}
.namebox,.fxbox,.formula{height:44px;background:#fff;border:1.500px solid #d6d6d6;border-radius:8px;display:flex;align-items:center}
.namebox{width:201px;justify-content:space-between;padding:0 9px 0 6px;letter-spacing:-.8px}
.dots{margin:11px 17px 0 17px}
.fxbox{width:170px;padding-left:11px;gap:18px}
.fxbox i{font:italic 600 36px/40px "Liberation Serif",serif;margin-left:0;width:24px;letter-spacing:-1px;-webkit-text-stroke:.4px #242424;margin-top:-4px;font-weight:400}
.fxbox .dim{color:#8a8a8a;margin-left:-3px}
.formula{margin-left:8px;flex:1;padding:0 9px 0 21px;justify-content:space-between}

.sheet{height:1122px;display:grid;grid-template-columns:25px 2816px 39px;grid-template-rows:20px 1102px;font:12.500px/19px "Open Sans",sans-serif;letter-spacing:-.2px;color:#444}
.colhead{grid-column:1/3;display:flex;padding-left:26px;border-bottom:1.500px solid #a0a0a0}
.colhead span{width:67px;text-align:center;border-right:1px solid #d5d5d5}
.colhead .sel{background:#dedede;color:#337344;border-bottom:3px solid #337344}
.rowhead{overflow:hidden}
.rowhead span{display:block;height:19px;line-height:20px;text-align:center;border-bottom:1px solid #e2e2e2}
.cells{position:relative;overflow:hidden;background:linear-gradient(90deg,#989af8 68px,#fff 68px 1809px,#989af8 1809px)}
.vscroll{grid-column:3;grid-row:1/3;margin:0 2px 0 5px;height:1126px;border-radius:16px;background:#f5f5f5;display:flex;flex-direction:column;align-items:center}
.vscroll .up,.vscroll .down{border:9px solid transparent;border-top:0;border-bottom:13px solid #707070;margin:11px 0 10px}
.vscroll .down{transform:rotate(180deg);margin-top:auto;margin-bottom:11px}
.vscroll .thumb{width:16px;height:761px;border-radius:8px;background:#707070}
.canvas{position:absolute;left:-25px;top:-510px;width:1700px;height:1700px}
.banner{position:absolute;left:222px;top:552px}
.banner-title{font:900 32px "Inter","Liberation Sans",sans-serif;fill:#fff}
.kpi{position:absolute;border:2px solid #5a2aa8;border-radius:18px;background:#989af8}
.kpi-profit{left:1306px;top:563px;width:184px;height:100px}
.kpi-sales{left:1492px;top:562px;width:167px;height:101px}
.kpi-text{position:absolute;left:1304px;top:558px;font:900 16px "Inter","Liberation Sans",sans-serif;letter-spacing:0;fill:#fff}
.naira{font-family:"DejaVu Sans",sans-serif;font-weight:400}
.slicer{position:absolute;border:1.500px solid #2c5f7f;background:#fff;padding:0 8px}
.slicer h4{margin:0;height:29px;border-bottom:1.500px solid #2c5f7f;display:flex;align-items:center;font:700 13.500px/28px "Liberation Sans",sans-serif;letter-spacing:-.4px;color:#000}
.slicer h4 svg{width:16px;height:16px}
.slicer h4 svg:first-of-type{margin:-3px 16px 0 auto}
.slicer h4 svg:last-of-type{margin:-1px 3px 0 0}
.slicer ul{list-style:none;margin:4px 0 0;padding:0;display:flex;flex-direction:column;gap:3px}
.slicer li{height:26px;border-radius:3px;background:#2c5f7f;color:#e6eef4;font:13.500px/25px "Open Sans",sans-serif;letter-spacing:-.2px;padding-left:9px}
.slicer.wide ul{flex-direction:row}
.slicer.wide li{height:72px;line-height:72px;flex:1}
.sl-rep{left:238px;top:676px;width:202px;height:366px}
.sl-brand{left:232px;top:1065px;width:202px;height:251px}
.sl-country{left:460px;top:675px;width:548px;height:115px}
.sl-region{left:1032px;top:675px;width:621px;height:115px}
.sl-region h4{height:28px}
.panel{position:absolute;background:#989af8;border:1.500px solid #5522aa;border-radius:13px;box-shadow:0 0 8px 3px rgba(60,60,60,.62);height:263px}
.p-yp{left:457px;top:800px;width:397px}
.p-pc{left:858px;top:800px;width:398px}
.p-pb{left:1261px;top:800px;width:398px}
.p-ys{left:457px;top:1070px;width:399px}
.p-sc{left:861px;top:1070px;width:398px}
.p-sb{left:1264px;top:1070px;width:397px}
.p-rep{left:233px;top:1349px;width:475px}
.p-cost{left:715px;top:1346px;width:435px}
.p-mon{left:1156px;top:1348px;width:504px}
.charts{position:absolute;left:230px;top:795px;font-family:"Open Sans",sans-serif;letter-spacing:0}
.charts .ttl{font-family:"Inter","Liberation Sans",sans-serif;font-weight:900}
.charts .ar{font-family:"Liberation Sans",sans-serif}

.tabs{height:64px;border-top:1.500px solid #dcdcdc;display:flex;align-items:flex-start;padding-left:42px;font-size:26px;letter-spacing:-.4px;white-space:nowrap}
.t-prev,.t-next{margin-top:20px}
.t-next{margin-left:53px}
.tab{margin-top:13px;height:36px;line-height:38px;border-right:2px solid #d1d1d1}
.t1{margin-left:114px;width:80px}
.active{margin:0 8px;margin-top:-1px;width:142px;height:57px;border:0;border-radius:0 0 10px 10px;background:#fff;box-shadow:0 2px 2px rgba(0,0,0,.2);padding:5px 16px 0}
.active b{display:block;height:46px;line-height:45px;font-weight:600;border-bottom:4px solid #337344;letter-spacing:.35px}
.t3{padding-left:27px;width:196px;border-left:2px solid #d1d1d1;margin-left:0}
.t4{padding-left:25px;width:210px}
.t-add{margin:18px 0 0 84px}
.t-dots{margin:20px 0 0 751px}
.hscroll{margin:13px 0 0 31px;width:1073px;height:34px;border-radius:16px;background:#f5f5f5;display:flex;align-items:center;padding:0 10px}
.hscroll .thumb{margin:0 34px 0 12px;flex:1;height:16px;border-radius:8px;background:#707070}
.hscroll .left,.hscroll .right{border:9px solid transparent;border-left:0;border-right:12px solid #707070}
.hscroll .right{transform:rotate(180deg)}
.status{height:44px;border-top:2px solid #fff;background:#f5f5f5;display:flex;align-items:center;padding-left:22px;font-size:21px;white-space:nowrap}
.s-ready{width:94px;margin-top:3px}
.status b{margin:3px 0 0 6px;font-size:21px;letter-spacing:-.75px}
.views{margin-left:auto;display:flex;align-self:stretch}
.views span{width:80px;display:flex;align-items:center;justify-content:center}
.views .sel{background:#e0e0e0}
.zoombar{margin-left:12px}
.pct{margin:3px 25px 0 26px;letter-spacing:-1px;width:39px}

.taskbar{height:80px;background:linear-gradient(90deg,#25363f,#25363f 45%,#1f2b3d 75%,#1b2640);display:flex;align-items:center;color:#fff}
.k-win{margin:0 32px}
.k-search{width:577px;height:80px;background:#f2f2f2;border:2px solid #bdbdbd;display:flex;align-items:center;gap:25px;padding-left:22px;color:#222;font-size:29px;letter-spacing:-.5px}
.k-search span{margin-top:5px}
.apps{display:flex;align-self:stretch}
.apps span{width:98px;display:flex;align-items:center;justify-content:center;border:solid transparent;border-width:4px 0}
.apps span:first-child{width:94px;margin-right:6px}
.apps .run{border-bottom-color:#85b7e8;width:80px;margin:0 9px}
.apps .cur{background:#505c66;border-bottom-color:#85b7e8;border-top-color:#505c66;width:96px;margin:0 1px}
.tray{margin-left:auto;display:grid;grid-template-columns:repeat(8,48px);align-items:center;justify-items:center}
.clock{width:140px;text-align:center;display:flex;flex-direction:column;line-height:37px;font-size:23px;margin:3px 22px 0 -2px}
.k-note{margin:6px 23px 0 0}
.note-n{font:22px "Open Sans",sans-serif;fill:#fff}
.k-peek{width:1.500px;background:#6a7285;margin-right:7px}
.watermark{position:absolute;left:2304px;top:1550px;display:flex;flex-direction:column;color:rgba(160,160,160,.75);font-size:37.500px;line-height:48px;white-space:nowrap;letter-spacing:.4px}
.watermark span:last-child{font-size:27px;line-height:44px;letter-spacing:.35px}
```
FILE: charts.js
```js
// Column letters and row numbers
const cols = document.getElementById('cols');
for (let i = 0; i < 42; i++) {
  const s = document.createElement('span');
  s.textContent = (i > 25 ? 'A' : '') + String.fromCharCode(65 + i % 26);
  if (i === 17) s.className = 'sel';
  cols.append(s);
}
const rows = document.getElementById('rows');
for (let i = 1; i <= 58; i++) {
  const s = document.createElement('span');
  s.textContent = i;
  rows.append(s);
}

const out = [];
const FRONT = '#2c5f7f', TOP = '#234b65', SIDE = '#1c3f54';
const DFRONT = '#22465f', DTOP = '#162f3f', DSIDE = '#1a3749';

// text fitted between x1 and x2, vertically centred on cy
function fit(x1, x2, cy, size, str, o = {}) {
  out.push(`<text x="${x1}" y="${cy + size * 0.36}" font-size="${size}" font-weight="${o.w || 400}" fill="${o.fill || '#fff'}" class="${o.cls || ''}" textLength="${x2 - x1}" lengthAdjust="${o.sp ? 'spacing' : 'spacingAndGlyphs'}">${str}</text>`);
}
const title = (x1, x2, cy, str, sp) => fit(x1, x2, cy, sp ? 13.8 : 14.2, str, { cls: 'ttl', sp });
const line = (x1, y1, x2, y2, c, w = 1.3) => out.push(`<path d="M${x1} ${y1}L${x2} ${y2}" stroke="${c}" stroke-width="${w}" fill="none"/>`);
const poly = (pts, fill) => out.push(`<polygon points="${pts}" fill="${fill}"/>`);
const rect = (x, y, w, h, fill, extra = '') => out.push(`<rect x="${x}" y="${y}" width="${w}" height="${h}" fill="${fill}" ${extra}/>`);

function column(x, top, bottom, w, dx, dy) {
  poly(`${x + w},${top} ${x + w + dx},${top - dy} ${x + w + dx},${bottom - dy} ${x + w},${bottom}`, SIDE);
  poly(`${x},${top} ${x + dx},${top - dy} ${x + w + dx},${top - dy} ${x + w},${top}`, TOP);
  rect(x, top, w, bottom - top, FRONT);
}
function bar(x, end, top, h, d, dark) {
  poly(`${x},${top} ${x + d},${top - d * 0.8} ${end + d},${top - d * 0.8} ${end},${top}`, dark ? DTOP : '#20475e');
  poly(`${end},${top} ${end + d},${top - d * 0.8} ${end + d},${top + h - d * 0.8} ${end},${top + h}`, dark ? DSIDE : SIDE);
  rect(x, top, end - x, h, dark ? DFRONT : FRONT);
}

// Yearly profit
title(595, 714, 820, 'YEARLY PROFIT');
const greys = ['#a8a8f0', '#a2a2e8', '#9b9be2', '#9292d8', '#8a8acc', '#8484c4', '#7676b4', '#6868a4', '#5a5a92'];
[845.5, 865.5, 886.5, 907.5, 927.5, 948.5, 969.5, 989.5, 1010.5].forEach((y, i) => line(472, y, 838, y, greys[i], 1.2));
line(472, 1031, 838, 1031, '#404048', 2.2);
out.push(`<path d="M532 872.500 655 878.500 777 907.500" fill="none" stroke="${FRONT}" stroke-width="3"/>`);
[[504, 863, 872.5, '38503320'], [626, 869, 878.5, '37063850'], [748, 898, 907.5, '30020250']].forEach(([x, y, m, s]) => {
  out.push(`<circle cx="${x + 28.5}" cy="${m}" r="11.500" fill="${DFRONT}"/>`);
  rect(x, y, 57, 18, DFRONT);
  fit(x + 4, x + 53, y + 9, 12, s, { w: 700 });
});
['2017', '2018', '2019'].forEach((s, i) => fit(520 + i * 122.3, 545 + i * 122.3, 1045, 12, s));

// Profit by country
title(977, 1136, 820, 'PROFIT BY COUNTRY');
for (let i = 0; i < 8; i++) {
  const y = 848.7 + i * 23.8;
  line(974, y, 1234, y, '#c6c6e0'); line(956, y + 14, 974, y, '#c6c6e0');
  fit(872, 943, 862.5 + i * 23.75, 12.5, '$2' + (1.6 - i * 0.2).toFixed(1).replace('.', ',') + '00,000', { w: 700 });
}
['Senegal', 'Nigeria', 'Ghana', 'Benin', 'Togo'].forEach((s, i) => {
  column(977.5 + i * 52, [871.7, 884.7, 927.7, 934, 959][i], 1024.5, 20.5, 7, 5);
  const w = [38, 34, 32, 27, 24][i], c = 982.5 + i * 51.7;
  fit(c - w / 2, c + w / 2, 1043, 12, s);
});

// Profit by brand
title(1390, 1527, 820, 'PROFIT BY BRAND');
['trophy', 'hero', 'grand malt', 'beta malt', 'eagle lager', 'budweiser', 'castle lite'].forEach((s, i) => {
  column(1308.5 + i * 45.7, [956.7, 956.7, 952.7, 949, 943.5, 869, 858.5][i], 979, 18.5, 6, 4.5);
  const len = [45, 31, 68, 60, 68, 66, 63][i], x = 1319 + i * 45.5;
  out.push(`<text x="${x}" y="1002" text-anchor="end" font-size="13" font-weight="700" fill="#fff" textLength="${len}" lengthAdjust="spacingAndGlyphs" transform="rotate(-45 ${x} 1002)">${s}</text>`);
});
[[1552, 819, 79, '$34,606,980'], [1507, 867, 79, '$31,568,500'], [1464, 910, 79, '$10,224,240'], [1329, 930, 72, '$6,453,000'], [1426, 938, 73, '$8,754,410'], [1281, 968, 72, '$6,402,950']].forEach(([x, y, w, s]) => {
  rect(x, y, w, 21, '#fff');
  fit(x + 4, x + w - 4, y + 10.5, 12.5, s, { fill: '#5a28a8', cls: 'ar' });
});
fit(1377, 1440, 966, 12.5, '$7,577,340', { cls: 'ar' });

// Yearly sales
title(592, 719, 1090, 'YEARLY SALES', true);
out.push('<linearGradient id="drop" x1="0" y1="0" x2="0" y2="1"><stop offset="0" stop-color="#fff"/><stop offset="1" stop-color="#fff" stop-opacity=".05"/></linearGradient>');
out.push(`<path d="M532 1142.500 655 1146.500 778 1173.500" fill="none" stroke="${FRONT}" stroke-width="3"/><path d="M532 1139.500 655 1144 778 1171" fill="none" stroke="#fff" stroke-width="3.500"/>`);
[[494, 1115, '$87,081,100.0'], [617, 1120, '$84,486,200.0'], [740, 1147, '$70,325,350.0']].forEach(([x, y, s], i) => {
  rect(x + 38, y + 48, 1.2, 1298 - y - 48, 'url(#drop)');
  rect(x, y, 78, 48, DFRONT);
  fit(x + 3, x + 75, y + 24, 12, s, { w: 700 });
  fit(x + 36, x + 42, y + 39, 12, '0', { w: 700 });
  fit(x + 26, x + 51, 1316, 12, 2017 + i);
});

// Sales by country
title(982.5, 1134, 1090, 'SALES BY COUNTRY');
['49,5', '49,0', '48,5', '48,0', '47,5', '47,0', '46,5'].forEach((s, i) => {
  const y = 1118.7 + i * 27.8;
  line(970, y, 1235, y, '#c6c6e0'); line(951, y + 14, 970, y, '#c6c6e0');
  fit(877, 938, 1133 + i * 27.7, 11.5, '$' + s + '00,000');
});
['Togo', 'Benin', 'Ghana', 'Nigeria', 'Senegal'].forEach((s, i) => {
  column(972.8 + i * 53.1, [1234, 1210, 1202, 1160, 1145][i], 1295, 21.5, 7, 5);
  const w = [24, 27, 31, 34, 38][i], c = 978.5 + i * 52.8;
  fit(c - w / 2, c + w / 2, 1313, 12, s);
});

// Sales by brand, drawn in perspective
title(1387, 1535, 1090, 'SALES BY BRAND', true);
[['$80,000,000', 1313, 1114], ['$60,000,000', 1314, 1141], ['$40,000,000', 1316, 1167], ['$20,000,000', 1317, 1192]].forEach(([s, x, y]) => fit(x, x + 61, y, 11.5, s));
fit(1365, 1375, 1217, 11.5, '$-');
const px = x => +(850 + x * 0.5293).toFixed(1), py = y => +(930 + y / 3).toFixed(1);
poly([[1036, 857], [1423, 932], [1421, 945], [1026, 862]].map(p => px(p[0]) + ',' + py(p[1])).join(' '), '#7d84d2');
[[1027, 544, 1036, 852, 1026, 862], [1079, 549, 1085, 864, 1076, 874], [1131, 553, 1135, 874, 1127, 884], [1187, 558, 1189, 885, 1180, 895], [1245, 562, 1244, 896, 1237, 906], [1306, 567, 1302, 908, 1295, 919], [1370, 573, 1361, 920, 1355, 932], [1436, 578, 1424, 934, 1421, 945]].forEach(p => {
  out.push(`<path d="M${px(p[0])} ${py(p[1])}L${px(p[2])} ${py(p[3])}L${px(p[4])} ${py(p[5])}" fill="none" stroke="#fff" stroke-width="1.200"/>`);
});
[[1038, 1060, 795, 866, 870, 1070, 1], [1089, 1112, 803, 877, 881, 1120, 1], [1142, 1165, 788, 886, 890, 1173, 1], [1197, 1221, 795, 897, 902, 1229, 0], [1254, 1279, 781, 910, 915, 1286, 0], [1317, 1342, 678, 921, 927, 1348, -4], [1382, 1408, 660, 934, 939, 1413, -7]].forEach(([a, b, t, l, r, s, k]) => {
  poly(`${px(b)},${py(t)} ${px(s)},${py(t - 6)} ${px(s + k)},${py(r - 10)} ${px(b + k)},${py(r)}`, '#132a3b');
  poly(`${px(a)},${py(t)} ${px(a + 8)},${py(t - 9)} ${px(s)},${py(t - 6)} ${px(b)},${py(t + 3)}`, '#1b3a4f');
  poly(`${px(a)},${py(t)} ${px(b)},${py(t + 3)} ${px(b + k)},${py(r)} ${px(a + k)},${py(l)}`, DFRONT);
});
[['BETA MALT', 1055, 910, 73], ['GRAND MALT', 1103, 918, 87], ['TROPHY', 1157, 932, 55], ['HERO', 1212, 945, 39], ['EAGLE LAGER', 1270, 957, 91], ['CASTLE LITE', 1328, 970, 83], ['BUDWEISER', 1390, 980, 81]].forEach(([s, x, y, len]) => {
  const X = px(x) + 1, Y = py(y) + 1;
  out.push(`<text x="${X}" y="${Y}" text-anchor="end" font-size="11.500" fill="#fff" textLength="${len}" transform="rotate(-45 ${X} ${Y})">${s}</text>`);
});

// Sales rep performance
title(353, 586, 1369, 'SALES REP PERFORMANCE', true);
line(321.5, 1406, 321.5, 1595, '#c9c9dc'); line(321.5, 1406.5, 333, 1398.5, '#c9c9dc'); line(333, 1398.5, 684, 1398.5, '#c9c9dc');
[['JONES', 880, 571, '$42,968,100', 36], ['JARDINE', 709, 484, '$30,988,250', 48], ['GILL', 663, 462, '$27,869,550', 25], ['SORVINO', 619, 441, '$24,901,850', 51], ['ANDREWS', 611, 437, '$24,358,700', 55], ['MORGAN', 524, 393, '$18,330,550', 49], ['SMITH', 491, 376, '$16,058,600', 34], ['PARENT', 487, 375, '$15,792,000', 43], ['KIVELL', 486, 375, '$15,697,850', 38], ['THOMPSON', 458, 360, '$13,767,450', 64], ['HOWARD', 421, 341, '$11,159,750', 50]].forEach(([n, e, c, v, w], i) => {
  const y = 1415.5 + i * 17.15, X = 200 + e * 0.4847, C = 200 + c * 0.4847;
  line(333, y, 684, y, '#c9c9dc'); line(321.5, y + 8, 333, y, '#c9c9dc');
  bar(325, X, 1408.3 + i * 17.15, 9.2, 4, true);
  fit(311 - w, 311, 1416 + i * 17.1, 10.5, n, { sp: true });
  fit(C - 27.5, C + 27.5, 1413.7 + i * 17.05, 11, v, { w: 700 });
});

// Cost by brand
title(865.5, 997.5, 1367, 'COST BY BRAND');
poly('791.500,1402 798,1397 798,1586 791.500,1591', '#8788cf');
[['budweiser', 1052, 1055.5, 56, '31568500', 49], ['castle lite', 982.5, 985.5, 57, '23071320', 46], ['eagle lager', 972, 974.5, 57, '21726510', 52], ['hero', 951.5, 955.5, 57, '19359000', 22], ['trophy', 950.5, 954, 57, '19208850', 31], ['grand malt', 886.5, 890.5, 56, '11366010', 52], ['beta malt', 875, 879.5, 56, '10005040', 45]].forEach(([n, e, bx, bw, v, w], i) => {
  const o = i * 26.85;
  bar(792, e, 1407.5 + o, 15, 5, true);
  fit(781 - w, 781, 1416.3 + o, 12, n);
  rect(bx + 4, 1412 + o, bw + 4, 20, 'rgba(90,90,150,.35)', 'style="filter:blur(3px)"');
  rect(bx, 1406.3 + o, bw, 18.7, '#adaff0', 'stroke="#cfd0f5" stroke-width="1.200"');
  fit(bx + 4, bx + bw - 4, 1415.5 + o, 12.5, v, { fill: '#5a28a8', cls: 'ar' });
});

// Monthly sales
fit(1327.5, 1487, 1368.5, 15, 'MONTHLY SALES', { cls: 'ttl', sp: true });
line(1198, 1404, 1198, 1592.5, '#c9c9dc'); line(1198, 1404, 1205, 1399, '#c9c9dc'); line(1205, 1399, 1634, 1399, '#c9c9dc');
[[1345, 948, '20746800'], [1248, 898, '20531850'], [1100, 825, '20207200'], [1076, 812, '20152500'], [1066, 807, '20129050'], [1066, 807, '20128500'], [1055, 802, '20107350'], [1050, 799, '20094800'], [1046, 797, '20085800'], [1017, 782, '20021650'], [1012, 780, '20009700'], [861, 705, '19677450']].forEach(([e, c, v], i) => {
  const o = i * 15.65, X = 940 + e * 0.4719, C = 940 + c * 0.4719, m = 12 - i, w = m > 9 ? 12 : 5.5;
  line(1205, 1414.7 + o, 1634, 1414.7 + o, '#c9c9dc'); line(1198, 1420.5 + o, 1205, 1414.7 + o, '#c9c9dc');
  bar(1200, X, 1406.3 + o, 9, 2.5, false);
  fit(1186.5 - w, 1186.5, 1412.7 + o, 11, m, { sp: true });
  fit(C - 22, C + 22, 1410.7 + o, 11, v, { w: 700 });
});

document.getElementById('charts').innerHTML = out.join('');
```
